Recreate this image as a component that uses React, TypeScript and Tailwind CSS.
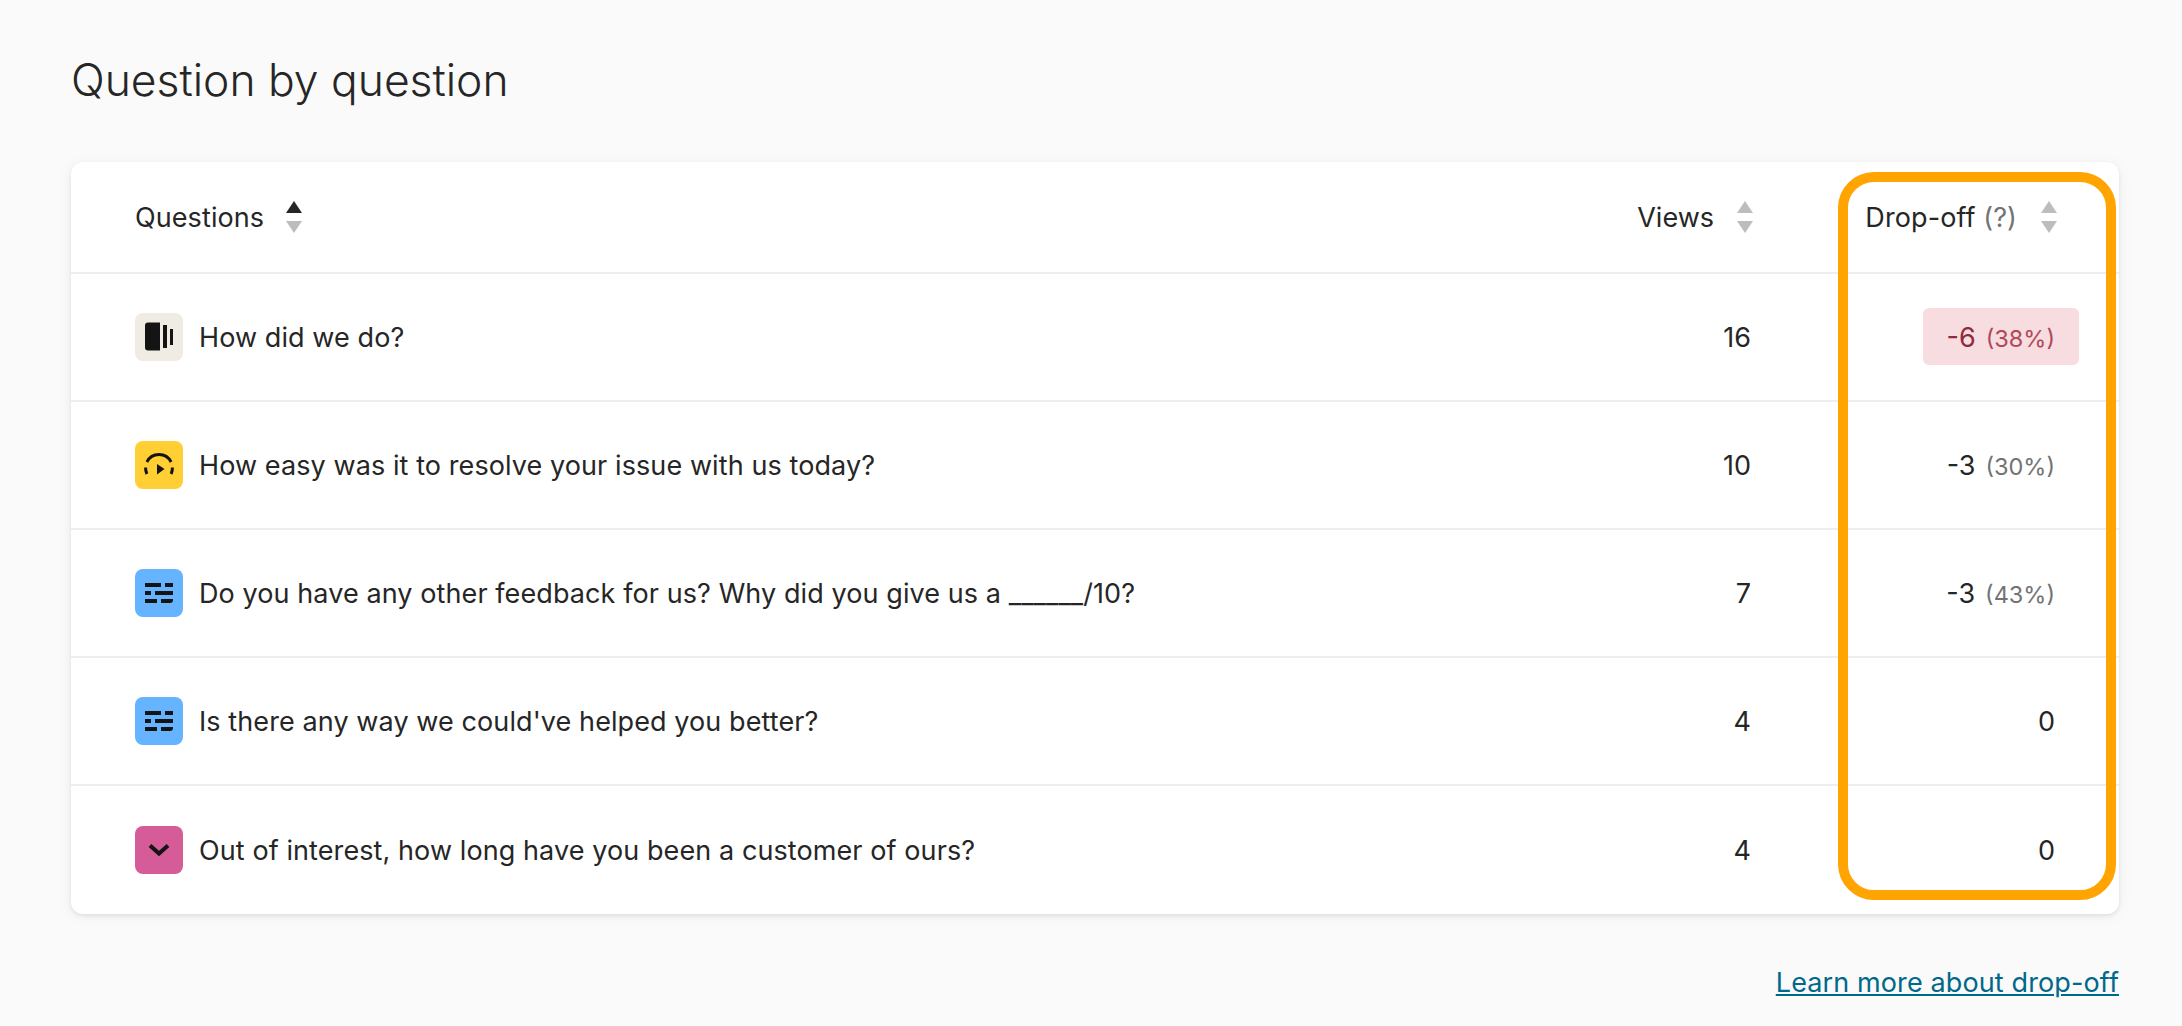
const FONT = "font-['Inter','Liberation_Sans',sans-serif]"

function SortArrows({ active = false }: { active?: boolean }) {
  return (
    <svg width="16" height="32" viewBox="0 0 16 32" className="shrink-0">
      <polygon points="8,0 16,12 0,12" fill={active ? '#262626' : '#bdbdbd'} />
      <polygon points="0,20 16,20 8,32" fill="#bdbdbd" />
    </svg>
  )
}

function IconBox({ kind }: { kind: 'statement' | 'rating' | 'text' | 'dropdown' }) {
  const bg = {
    statement: 'bg-[#f0ece4]',
    rating: 'bg-[#ffcf33]',
    text: 'bg-[#66b3ff]',
    dropdown: 'bg-[#d65c99]',
  }[kind]
  return (
    <div className={`h-12 w-12 shrink-0 rounded-lg ${bg}`}>
      <svg width="48" height="48" viewBox="0 0 48 48" fill="#141414">
        {kind === 'statement' && (
          <>
            <path d="M13 9.5h12v28H13a3 3 0 0 1-3-3v-22a3 3 0 0 1 3-3z" />
            <rect x="28" y="12" width="4" height="23" />
            <rect x="35" y="16" width="3" height="16" />
          </>
        )}
        {kind === 'rating' && (
          <>
            <g fill="none" stroke="#141414" strokeWidth="3">
              <path d="M11.9 21A13.5 13.5 0 0 1 36.1 21" />
              <path d="M10.6 26.5A13.5 13.5 0 0 0 11.9 33" />
              <path d="M37.4 26.5A13.5 13.5 0 0 1 36.1 33" />
            </g>
            <polygon points="22,23 29.5,28 22,33.5" />
          </>
        )}
        {kind === 'text' && (
          <>
            <rect x="10" y="14" width="16" height="4" />
            <rect x="30" y="14" width="8" height="4" />
            <rect x="10" y="22" width="6" height="4" />
            <rect x="20" y="22" width="18" height="4" />
            <rect x="10" y="30" width="12" height="4" />
            <path d="M26 30h12v1a3 3 0 0 1-3 3h-9z" />
          </>
        )}
        {kind === 'dropdown' && (
          <polyline points="15,19.5 24,27.5 33,19.5" fill="none" stroke="#141414" strokeWidth="4" />
        )}
      </svg>
    </div>
  )
}

const ROWS = [
  { kind: 'statement', title: 'How did we do?', views: 16, drop: '-6', pct: '(38%)', high: true },
  { kind: 'rating', title: 'How easy was it to resolve your issue with us today?', views: 10, drop: '-3', pct: '(30%)' },
  { kind: 'text', title: 'Do you have any other feedback for us? Why did you give us a ______/10?', views: 7, drop: '-3', pct: '(43%)' },
  { kind: 'text', title: "Is there any way we could've helped you better?", views: 4, drop: '0' },
  { kind: 'dropdown', title: 'Out of interest, how long have you been a customer of ours?', views: 4, drop: '0' },
] as const

export default function App() {
  return (
    <div className={`${FONT} h-[1026px] overflow-hidden bg-[#fafafa] pl-[71px] pr-[63px] pt-[52px] text-[#262626]`}>
      <h1 className="text-[44.4px] font-light leading-[56px] text-[#262626]">Question by question</h1>

      <div className="relative mt-[54px] rounded-xl bg-white shadow-[0_2px_4px_rgba(0,0,0,0.08),0_2px_16px_rgba(0,0,0,0.05)]">
        <div className="flex h-[112px] items-center border-b-2 border-[#eeeeee] pl-16 text-[27px] tracking-[0.09px]">
          <div className="flex flex-1 items-center gap-[22px]">
            <span className="pt-[3px]">Questions</span>
            <SortArrows active />
          </div>
          <div className="flex items-center gap-[23px]">
            <span className="pt-[3px] tracking-normal">Views</span>
            <SortArrows />
          </div>
          <div className="flex w-[366px] items-center justify-end gap-6 pr-[62px]">
            <span className="pt-[3px]">
              Drop-off <span className="text-[#737373]">(?)</span>
            </span>
            <SortArrows />
          </div>
        </div>

        {ROWS.map((row, i) => (
          <div
            key={i}
            className={`flex items-center pl-16 text-[27px] ${i === ROWS.length - 1 ? 'h-32' : 'h-32 border-b-2 border-[#eeeeee]'}`}
          >
            <div className="flex flex-1 items-center gap-4">
              <IconBox kind={row.kind} />
              <span className="pt-[3px] tracking-[0.09px]">{row.title}</span>
            </div>
            <div className="pt-[3px] text-right">{row.views}</div>
            <div className="flex w-[368px] justify-end pb-px pr-10">
              <div
                className={`flex h-[57px] items-center gap-[10px] rounded-md pl-[24px] pr-[24px] pt-[4px] ${
                  'high' in row ? 'bg-[#f7dce0] text-[#8f2b3c]' : ''
                }`}
              >
                <span>{row.drop}</span>
                {'pct' in row && (
                  <span className={`text-[23.5px] ${'high' in row ? 'text-[#b0485a]' : 'text-[#737373]'}`}>{row.pct}</span>
                )}
              </div>
            </div>
          </div>
        ))}

        {/* orange highlight drawn over the drop-off column */}
        <div className="pointer-events-none absolute right-[3px] top-[10px] h-[728px] w-[278px] rounded-[36px] border-[10px] border-[#ffa400]" />
      </div>

      <div className="mt-[49px] text-right text-[27px] tracking-[0.12px]">
        <a href="#" className="text-[#00688a] underline">
          Learn more about drop-off
        </a>
      </div>
    </div>
  )
}
